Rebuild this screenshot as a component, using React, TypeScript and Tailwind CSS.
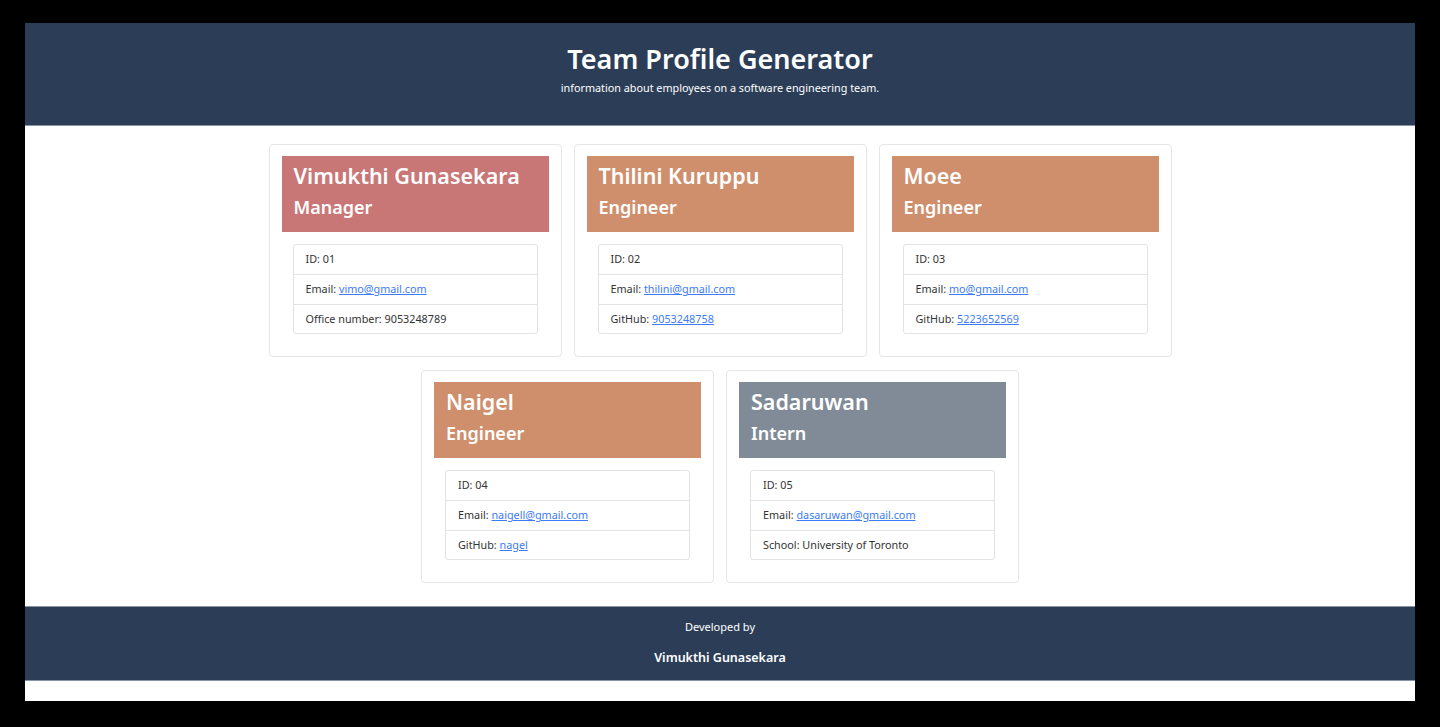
const team = [
    { name: "Vimukthi Gunasekara", role: "Manager", id: "01", email: "vimo@gmail.com", extraLabel: "Office number", extra: "9053248789", link: false, color: "bg-[#c97676]" },
    { name: "Thilini Kuruppu", role: "Engineer", id: "02", email: "thilini@gmail.com", extraLabel: "GitHub", extra: "9053248758", link: true, color: "bg-[#cf8f6d]" },
    { name: "Moee", role: "Engineer", id: "03", email: "mo@gmail.com", extraLabel: "GitHub", extra: "5223652569", link: true, color: "bg-[#cf8f6d]" },
    { name: "Naigel", role: "Engineer", id: "04", email: "naigell@gmail.com", extraLabel: "GitHub", extra: "nagel", link: true, color: "bg-[#cf8f6d]" },
    { name: "Sadaruwan", role: "Intern", id: "05", email: "dasaruwan@gmail.com", extraLabel: "School", extra: "University of Toronto", link: false, color: "bg-[#818b97]" },
]

function Card({ member }: { member: (typeof team)[number] }) {
    return (
        <div className="w-[293px] h-[213px] border border-[#e6e6e6] rounded-[4px] px-3 pt-[11px] bg-white">
            <div className={`${member.color} h-[76px] px-3 pt-[5px] text-white`}>
                <h2 className="text-[21.5px] leading-[30px] font-semibold">{member.name}</h2>
                <h3 className="text-[18px] leading-[32px] font-semibold">{member.role}</h3>
            </div>
            <ul className="mt-3 mx-[11px] border border-[#e3e3e3] rounded-[3px] text-[10.8px] text-[#333]">
                <li className="h-[30px] px-3 flex items-center border-b border-[#e3e3e3]">ID: {member.id}</li>
                <li className="h-[30px] px-3 flex items-center border-b border-[#e3e3e3]">
                    Email:&nbsp;<a href="#" className="text-[#3d7bf7] underline">{member.email}</a>
                </li>
                <li className="h-[28px] px-3 flex items-center">
                    {member.extraLabel}:&nbsp;
                    {member.link ? <a href="#" className="text-[#3d7bf7] underline">{member.extra}</a> : member.extra}
                </li>
            </ul>
        </div>
    )
}

export default function App() {
    return (
        <div className="min-h-[727px] bg-black pt-[23px] px-[25px] pb-[27px] font-['Noto_Sans',sans-serif]">
            <div className="bg-white pb-[20px]">
                <header className="h-[103px] bg-[#2c3e57] border-b border-[#8894a6] flex flex-col items-center text-white">
                    <h1 className="mt-[20px] text-[27px] leading-[32px] font-semibold">Team Profile Generator</h1>
                    <p className="mt-[5px] text-[10.8px] leading-[16px]">information about employees on a software engineering team.</p>
                </header>
                <main className="pt-[18px] pb-[23px] flex flex-wrap justify-center gap-x-3 gap-y-[13px] max-w-[920px] mx-auto">
                    {team.map((m) => (
                        <Card key={m.id} member={m} />
                    ))}
                </main>
                <footer className="h-[75px] bg-[#2c3e57] border-y border-[#8894a6] flex flex-col items-center text-white">
                    <p className="mt-[12px] text-[11px] leading-[16px]">Developed by</p>
                    <p className="mt-[14px] text-[12.5px] leading-[18px] font-semibold">Vimukthi Gunasekara</p>
                </footer>
            </div>
        </div>
    )
}
